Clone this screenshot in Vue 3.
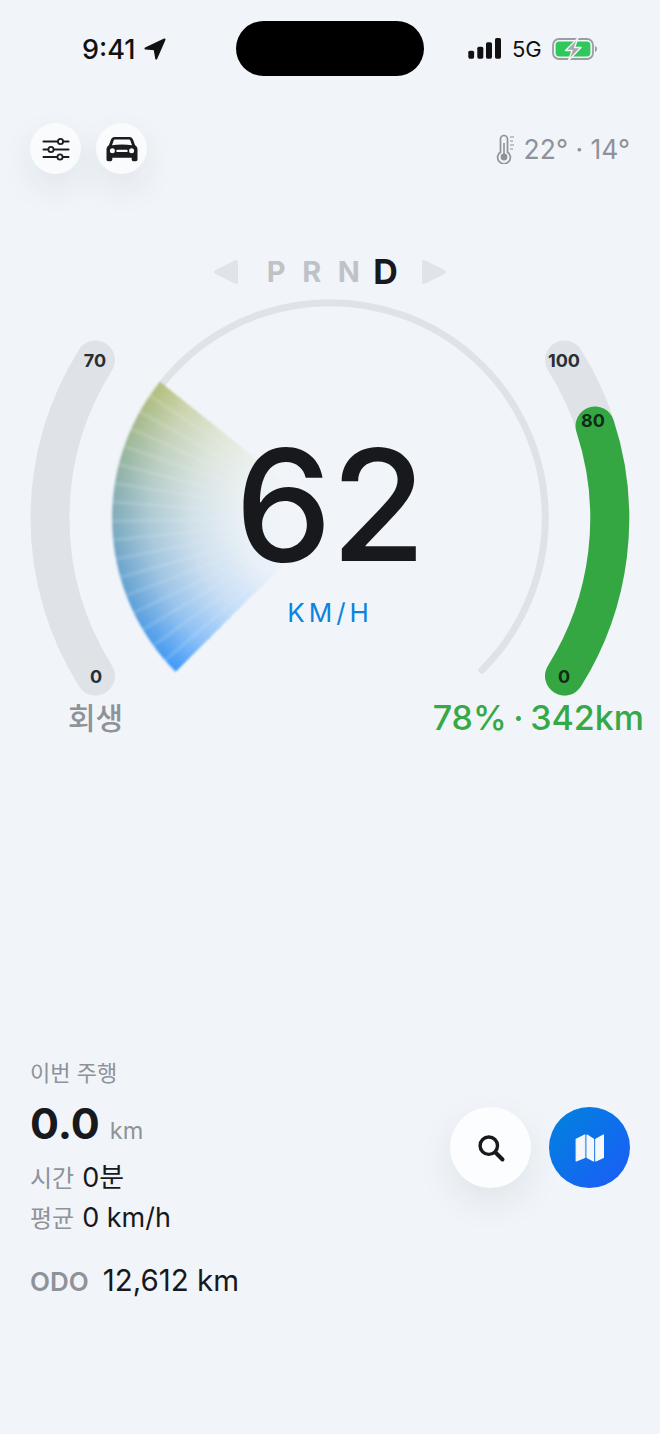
<script setup>
const gears = [
  { name: 'P', active: false },
  { name: 'R', active: false },
  { name: 'N', active: false },
  { name: 'D', active: true }
]
const scale = [
  { text: '70', x: 95, y: 64 },
  { text: '0', x: 96, y: 380 },
  { text: '100', x: 564, y: 64 },
  { text: '80', x: 593, y: 124, dark: true },
  { text: '0', x: 564, y: 380, dark: true }
]
</script>

<template>
  <div class="page">
    <div class="status">
      <div class="status-left">
        <span class="time">9:41</span>
        <svg class="loc" width="24" height="24" viewBox="0 0 24 24">
          <path d="M21.500 2.500 2.500 11.500 11.600 12.200 13.200 21.500Z" fill="#111" stroke="#111" stroke-width="2" stroke-linejoin="round" />
        </svg>
      </div>
      <div class="island"></div>
      <div class="status-right">
        <svg width="34" height="22" viewBox="0 0 34 22">
          <rect x="0.300" y="12.700" width="5.800" height="8" rx="1.600" fill="#111" />
          <rect x="9.300" y="8.700" width="6" height="12" rx="1.600" fill="#111" />
          <rect x="18" y="4.300" width="6" height="16.400" rx="1.600" fill="#111" />
          <rect x="27" y="0" width="6" height="20.700" rx="1.600" fill="#111" />
        </svg>
        <span class="net">5G</span>
        <svg width="46" height="24" viewBox="0 0 46 24">
          <rect x="1" y="2" width="40" height="20" rx="6" fill="none" stroke="#9b9ea1" stroke-width="1.800" />
          <rect x="3.600" y="4.600" width="34.800" height="14.800" rx="3.600" fill="#2fc95b" />
          <path d="M43 9v6c1.400-.4 2-1.600 2-3s-.6-2.600-2-3Z" fill="#9b9ea1" />
          <path d="M26 1 13.500 13.500H20L16.500 23.500 29 10.500H22.500Z" fill="#a6a8aa" stroke="#f1f5f9" stroke-width="1.400" stroke-linejoin="round" />
        </svg>
      </div>
    </div>

    <div class="toolbar">
      <div class="tool-group">
        <button class="round-btn">
          <svg width="28" height="24" viewBox="0 0 28 24">
            <g stroke="#1a1c20" stroke-width="2" stroke-linecap="round" fill="none">
              <path d="M1.500 4.500h25M1.500 12.500h25M1.500 20h25" />
            </g>
            <g stroke="#1a1c20" stroke-width="1.800" fill="#f9fbfc">
              <circle cx="18.500" cy="4.500" r="2.600" />
              <circle cx="9" cy="12.500" r="2.600" />
              <circle cx="18" cy="20" r="2.600" />
            </g>
          </svg>
        </button>
        <button class="round-btn">
          <svg width="32" height="26" viewBox="0 0 32 26">
            <path fill-rule="evenodd" fill="#1a1c20" d="M8.800 1h14.400c2 0 3.300 1 4 2.900l1.900 5.300c1.500 1 2.400 2.500 2.400 4.300v10c0 1-.7 1.700-1.700 1.700h-2.400c-1 0-1.700-.7-1.700-1.700v-1.800H6.300v1.800c0 1-.7 1.700-1.700 1.700H2.200c-1 0-1.700-.7-1.700-1.700v-10c0-1.800.9-3.300 2.400-4.300l1.900-5.300C5.500 2 6.800 1 8.800 1Zm.5 2.600c-.9 0-1.500.4-1.800 1.300L6 9.300c3-.5 6.300-.8 10-.8s7 .3 10 .8l-1.500-4.400c-.3-.9-.9-1.300-1.800-1.300ZM6.400 12.300a2.500 2.500 0 1 0 0 5 2.500 2.500 0 0 0 0-5Zm19.200 0a2.500 2.500 0 1 0 0 5 2.500 2.500 0 0 0 0-5Zm-14.100 1.500c-.7 0-1.200.5-1.200 1.100s.5 1.100 1.200 1.100h9c.7 0 1.200-.5 1.200-1.100s-.5-1.100-1.200-1.100Z" />
          </svg>
        </button>
      </div>
      <div class="weather">
        <svg width="20" height="30" viewBox="0 0 20 30">
          <path d="M4.500 17V4a3.500 3.500 0 0 1 7 0v13a6.400 6.400 0 1 1-7 0Z" transform="translate(0 1)" fill="none" stroke="#8e9299" stroke-width="1.700" />
          <circle cx="8" cy="23" r="3.400" fill="#8e9299" />
          <path d="M8 23V9" stroke="#8e9299" stroke-width="1.600" />
          <path d="M14 3h4M14 7h3M14 11h4M14 15h3" stroke="#8e9299" stroke-width="1.200" />
        </svg>
        <span>22° · 14°</span>
      </div>
    </div>

    <div class="gears">
      <svg class="arrow" width="26" height="26" viewBox="0 0 26 26">
        <path d="M23 3 3 13l20 10Z" fill="#e0e4e8" stroke="#e0e4e8" stroke-width="4" stroke-linejoin="round" />
      </svg>
      <div class="gear-list">
        <span v-for="g in gears" :key="g.name" class="gear" :class="{ on: g.active }">{{ g.name }}</span>
      </div>
      <svg class="arrow" width="26" height="26" viewBox="0 0 26 26">
        <path d="M3 3l20 10L3 23Z" fill="#e0e4e8" stroke="#e0e4e8" stroke-width="4" stroke-linejoin="round" />
      </svg>
    </div>

    <div class="gauge">
      <svg class="arcs" width="660" height="444" viewBox="0 0 660 444">
        <g fill="none" stroke-linecap="round">
          <path d="M95.500 64A297 297 0 0 0 95.500 380" stroke="#dfe3e7" stroke-width="39" />
          <path d="M564.500 64A297 297 0 0 1 564.500 380" stroke="#dfe3e7" stroke-width="39" />
          <path d="M564.500 380A297 297 0 0 0 595 130" stroke="#34a743" stroke-width="39" />
          <path d="M162.200 87.600A215 215 0 1 1 482 374" stroke="#dfe3e7" stroke-width="7" />
        </g>
        <text v-for="s in scale" :key="s.text + s.x" class="tick" :class="{ dark: s.dark }" :x="s.x" :y="s.y" text-anchor="middle" dominant-baseline="central">{{ s.text }}</text>
      </svg>
      <div class="fan-soft"><div class="fan"></div></div>
      <div class="readout">
        <div class="speed">62</div>
        <div class="unit">KM/H</div>
      </div>
      <div class="gauge-captions">
        <span class="regen">회생</span>
        <span class="range">78% · 342km</span>
      </div>
    </div>

    <div class="bottom">
      <div class="trip">
        <div class="trip-title">이번 주행</div>
        <div class="trip-dist"><b>0.0</b><span>km</span></div>
        <div class="trip-row"><span>시간</span>0분</div>
        <div class="trip-row"><span>평균</span>0 km/h</div>
        <div class="odo"><span>ODO</span>12,612 km</div>
      </div>
      <div class="actions">
        <button class="big-btn">
          <svg width="32" height="32" viewBox="0 0 32 32">
            <circle cx="13.800" cy="13.700" r="8.700" fill="none" stroke="#17191d" stroke-width="3.400" />
            <path d="M20.500 20.500 27.500 27.500" stroke="#17191d" stroke-width="4" stroke-linecap="round" />
          </svg>
        </button>
        <button class="big-btn map">
          <svg width="32" height="32" viewBox="0 0 32 32">
            <g fill="#f4f8fd" stroke="#f4f8fd" stroke-width="1.200" stroke-linejoin="round">
              <path d="M2.200 7.200 10.800 3V25.400L2.200 29Z" />
              <path d="M13 3 19.600 7.200V29L13 25.400Z" />
              <path d="M21.800 7.200 29.400 3V25.400L21.800 29Z" />
            </g>
          </svg>
        </button>
      </div>
    </div>
  </div>
</template>

<style scoped>
.page {
  width: 660px;
  height: 1434px;
  background: #f1f5f9;
  display: flex;
  flex-direction: column;
  overflow: hidden;
  font-family: "Inter", "Noto Sans CJK KR", sans-serif;
  color: #17191d;
}
.status {
  height: 97px;
  padding-top: 21px;
  box-sizing: border-box;
  display: flex;
  justify-content: center;
  position: relative;
}
.status-left {
  position: absolute;
  left: 82px;
  top: 34px;
  display: flex;
  align-items: center;
  gap: 8px;
  height: 30px;
}
.time {
  font-size: 27px;
  font-weight: 500;
  color: #111;
}
.loc {
  margin-top: -1px;
}
.island {
  width: 188px;
  height: 55px;
  background: #000;
  border-radius: 28px;
}
.status-right {
  position: absolute;
  left: 468px;
  top: 37px;
  display: flex;
  align-items: center;
  gap: 10px;
  height: 24px;
}
.net {
  font-size: 22px;
  font-weight: 400;
  color: #111;
}
.toolbar {
  margin-top: 26px;
  padding: 0 30px;
  height: 51px;
  display: flex;
  justify-content: space-between;
  align-items: center;
}
.tool-group {
  display: flex;
  gap: 15px;
}
.round-btn {
  width: 51px;
  height: 51px;
  border: none;
  padding: 0;
  border-radius: 50%;
  background: #f9fbfc;
  display: flex;
  align-items: center;
  justify-content: center;
  box-shadow: 0 14px 34px rgba(30, 40, 50, 0.08);
}
.weather {
  display: flex;
  align-items: center;
  gap: 8px;
  font-size: 26.500px;
  color: #8e9299;
}
.gears {
  margin-top: 84px;
  height: 28px;
  display: flex;
  justify-content: center;
  align-items: center;
  gap: 26px;
}
.gear-list {
  display: flex;
  align-items: center;
  gap: 17.500px;
  margin-left: 2px;
}
.gear {
  width: 18px;
  text-align: center;
  font-size: 29px;
  font-weight: 700;
  line-height: 28px;
  color: #bfc3c8;
}
.gear.on {
  width: 22px;
  font-size: 34px;
  color: #17191d;
}
.gauge {
  position: relative;
  margin-top: 10px;
  height: 444px;
}
.arcs {
  display: block;
}
.tick {
  font-family: "Inter", sans-serif;
  font-size: 18px;
  font-weight: 700;
  fill: #2a2d33;
}
.tick.dark {
  fill: #0f2c14;
}
.fan-soft {
  position: absolute;
  left: 111px;
  top: 3px;
  width: 438px;
  height: 438px;
  filter: blur(1px);
}
.fan {
  width: 100%;
  height: 100%;
  background:
    repeating-conic-gradient(from 225deg, rgba(255, 255, 255, 0) 0deg, rgba(255, 255, 255, 0) 3.400deg, rgba(255, 255, 255, 0.16) 4.200deg, rgba(255, 255, 255, 0) 5deg),
    conic-gradient(from 225deg, #3d99fb 0deg, #5fa0d8 22deg, #85aeb5 50deg, #a3b98f 70deg, #b5c07c 83.7deg);
  -webkit-mask-image:
    conic-gradient(from 225deg, #000 0 83.7deg, transparent 83.7deg),
    radial-gradient(circle closest-side, transparent 22%, rgba(0, 0, 0, 0.06) 40%, rgba(0, 0, 0, 0.26) 62%, rgba(0, 0, 0, 0.58) 82%, #000 99%, transparent 100%);
  mask-image:
    conic-gradient(from 225deg, #000 0 83.7deg, transparent 83.7deg),
    radial-gradient(circle closest-side, transparent 22%, rgba(0, 0, 0, 0.06) 40%, rgba(0, 0, 0, 0.26) 62%, rgba(0, 0, 0, 0.58) 82%, #000 99%, transparent 100%);
  -webkit-mask-composite: source-in;
  mask-composite: intersect;
}
.readout {
  position: absolute;
  left: 0;
  right: 0;
  top: 132px;
  display: flex;
  flex-direction: column;
  align-items: center;
}
.speed {
  font-size: 154px;
  line-height: 154px;
  font-weight: 500;
  letter-spacing: -1px;
  color: #17191d;
}
.unit {
  margin-top: 15px;
  font-size: 26px;
  line-height: 32px;
  letter-spacing: 4px;
  color: #0a84e0;
}
.gauge-captions {
  position: absolute;
  left: 0;
  right: 0;
  top: 400px;
}
.regen {
  position: absolute;
  left: 68px;
  top: 0;
  font-size: 30px;
  line-height: 44px;
  font-weight: 500;
  color: #8e9299;
}
.range {
  position: absolute;
  right: 16px;
  top: 0;
  font-size: 34px;
  line-height: 44px;
  font-weight: 500;
  word-spacing: -2.500px;
  color: #35a947;
}
.bottom {
  margin-top: auto;
  padding: 0 30px 132px;
  display: flex;
  justify-content: space-between;
  align-items: flex-start;
}
.trip-title {
  font-size: 22px;
  line-height: 30px;
  color: #8e9299;
}
.trip-dist {
  margin-top: 8px;
  line-height: 54px;
  display: flex;
  align-items: baseline;
  gap: 10px;
}
.trip-dist b {
  font-size: 43px;
  font-weight: 700;
}
.trip-dist span {
  font-size: 23.500px;
  font-weight: 400;
  color: #8e9299;
}
.trip-row {
  height: 40px;
  line-height: 40px;
  font-size: 27px;
}
.trip-row span {
  font-size: 24px;
  color: #8e9299;
  margin-right: 8px;
}
.odo {
  margin-top: 22px;
  line-height: 40px;
  font-size: 29.500px;
}
.odo span {
  font-size: 26px;
  font-weight: 600;
  color: #8e9299;
  margin-right: 14px;
}
.actions {
  display: flex;
  gap: 18px;
  margin-top: 49px;
}
.big-btn {
  width: 81px;
  height: 81px;
  border: none;
  padding: 0;
  border-radius: 50%;
  background: #fbfdfe;
  display: flex;
  align-items: center;
  justify-content: center;
  box-shadow: 0 14px 36px rgba(30, 40, 50, 0.08);
}
.big-btn.map {
  background: linear-gradient(135deg, #0083dc, #1c5cf8);
  box-shadow: none;
}
</style>

<style>
html,
body {
  margin: 0;
  background: #f1f5f9;
}
</style>
